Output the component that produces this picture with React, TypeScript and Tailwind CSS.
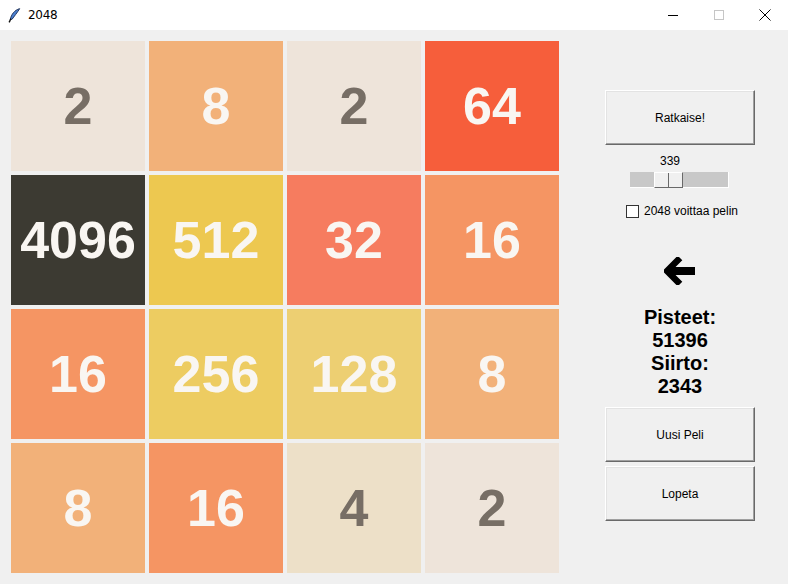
import React from "react";

const board = [
  [2, 8, 2, 64],
  [4096, 512, 32, 16],
  [16, 256, 128, 8],
  [8, 16, 4, 2],
];

const tileBg: Record<number, string> = {
  2: "bg-[#eee4da]",
  4: "bg-[#ede0c8]",
  8: "bg-[#f2b179]",
  16: "bg-[#f59563]",
  32: "bg-[#f67c5f]",
  64: "bg-[#f65e3b]",
  128: "bg-[#edcf72]",
  256: "bg-[#edcc61]",
  512: "bg-[#edc850]",
  4096: "bg-[#3c3a32]",
};

function Tile({ value }: { value: number }) {
  const dark = value <= 4;
  return (
    <div
      className={`${tileBg[value]} flex items-center justify-center font-bold text-[52px] ${
        dark ? "text-[#776e65]" : "text-[#f9f6f2]"
      }`}
    >
      {value}
    </div>
  );
}

function TkButton({ label, className = "" }: { label: string; className?: string }) {
  return (
    <div
      className={`w-[150px] h-[55px] flex items-center justify-center bg-[#f0f0f0] border border-t-white border-l-white border-r-[#696969] border-b-[#696969] shadow-[inset_-1px_-1px_0_#a0a0a0,inset_1px_1px_0_#e3e3e3] text-[12px] text-black ${className}`}
    >
      {label}
    </div>
  );
}

export default function App() {
  return (
    <div className="w-[788px] h-[584px] bg-[#f0f0f0] flex flex-col font-['Liberation_Sans',sans-serif] overflow-hidden">
      {/* title bar */}
      <div className="h-[30px] bg-white flex items-center">
        <svg width="13" height="15" viewBox="0 0 12 14" className="ml-[8px]">
          <path d="M10.8 0.6 C6 2 3 6 2 10.8 L3.8 10.4 C5.5 8 8.5 4.5 10.8 0.6 Z" fill="#4a7fd0" stroke="#1a2f5a" strokeWidth="0.9" />
          <path d="M2.6 10 L1 13.4" stroke="#111" strokeWidth="1.3" />
        </svg>
        <span className="ml-[7px] text-[12px] text-black font-['DejaVu_Sans',sans-serif] tracking-[-0.3px]">2048</span>
        <div className="ml-auto flex items-center h-full">
          <div className="w-[46px] h-full flex items-center justify-center">
            <div className="w-[10px] h-px bg-black" />
          </div>
          <div className="w-[46px] h-full flex items-center justify-center">
            <div className="w-[10px] h-[10px] border border-[#c6c6c6]" />
          </div>
          <div className="w-[46px] h-full flex items-center justify-center">
            <svg width="12" height="12" viewBox="0 0 12 12">
              <path d="M0.5 0.5 L11.5 11.5 M11.5 0.5 L0.5 11.5" stroke="#000" strokeWidth="1" />
            </svg>
          </div>
        </div>
      </div>

      <div className="flex">
        {/* board */}
        <div className="ml-[11px] mt-[11px] grid grid-cols-[repeat(4,134px)] grid-rows-[repeat(4,130px)] gap-[4px]">
          {board.flat().map((v, i) => (
            <Tile key={i} value={v} />
          ))}
        </div>

        {/* side panel */}
        <div className="ml-[46px] mt-[60px] w-[150px] flex flex-col items-center">
          <TkButton label="Ratkaise!" />

          <div className="mt-[9px] text-[12px] leading-[14px] text-black ml-[-20px]">339</div>
          <div className="mt-[4px] ml-[-2px] w-[99px] h-[16px] bg-[#c8c8c8] border-b border-r border-white flex">
            <div className="ml-[24px] w-[29px] h-[16px] bg-[#f0f0f0] border border-t-white border-l-white border-r-[#696969] border-b-[#696969] flex">
              <div className="ml-[13px] w-px h-full bg-[#696969]" />
            </div>
          </div>

          <div className="mt-[14px] ml-[4px] flex items-center">
            <div className="w-[13px] h-[13px] bg-white border border-[#333]" />
            <span className="ml-[5px] text-[12px] text-black">2048 voittaa pelin</span>
          </div>

          <svg width="32" height="28" viewBox="0 0 32 28" className="mt-[37px]">
            <path d="M16 1 L3 14 L16 27" fill="none" stroke="#000" strokeWidth="6.5" strokeLinejoin="miter" />
            <rect x="7" y="10" width="24" height="8" fill="#000" />
          </svg>

          <div className="mt-[21px] text-[20px] leading-[23px] font-bold text-black text-center">
            <div>Pisteet:</div>
            <div>51396</div>
            <div>Siirto:</div>
            <div>2343</div>
          </div>

          <TkButton label="Uusi Peli" className="mt-[9px]" />
          <TkButton label="Lopeta" className="mt-[4px]" />
        </div>
      </div>
    </div>
  );
}
